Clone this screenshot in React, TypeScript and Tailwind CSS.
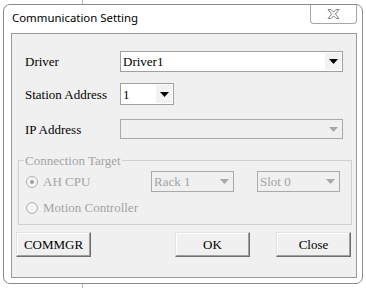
const serif = { fontFamily: '"Liberation Serif", "Times New Roman", serif' };

function Arrow({ disabled }: { disabled?: boolean }) {
  return (
    <svg width="9" height="5" viewBox="0 0 9 5">
      <polygon points="0,0 9,0 4.5,5" fill={disabled ? "#a8a8a8" : "#000"} />
    </svg>
  );
}

function Select({
  value,
  width,
  height,
  disabled,
}: {
  value?: string;
  width: string;
  height: string;
  disabled?: boolean;
}) {
  return (
    <div
      className={`flex items-stretch border ${width} ${height} ${
        disabled ? "border-[#a9a9a9] bg-[#f0f0f0]" : "border-[#a0a0a0] bg-white"
      }`}
    >
      <div
        className={`flex-1 flex items-center pl-[2px] text-[13px] leading-none ${
          disabled ? "text-[#a4a4a4]" : "text-black"
        }`}
        style={serif}
      >
        {value}
      </div>
      <div
        className={`w-[16px] m-[1px] flex items-center justify-center ${
          disabled ? "" : "bg-[#f2f2f2]"
        }`}
      >
        <Arrow disabled={disabled} />
      </div>
    </div>
  );
}

function Radio({ checked, label }: { checked?: boolean; label: string }) {
  return (
    <div className="flex items-center h-[15px]">
      <div className="w-[12px] h-[12px] rounded-full border border-[#b0b0b0] bg-[#f4f4f4] flex items-center justify-center ml-[7px]">
        {checked && <div className="w-[4px] h-[4px] rounded-full bg-[#a0a0a0]" />}
      </div>
      <span className="ml-[5px] text-[13px] text-[#a4a4a4] leading-none" style={serif}>
        {label}
      </span>
    </div>
  );
}

function Button({ label }: { label: string }) {
  return (
    <button
      className="w-[75px] h-[25px] bg-[#f0f0f0] border border-t-[#e3e3e3] border-l-[#e3e3e3] border-r-[#6e6e6e] border-b-[#6e6e6e] text-[13px] text-black leading-none shadow-[inset_-1px_-1px_0_#a0a0a0,inset_1px_1px_0_#ffffff]"
      style={serif}
    >
      {label}
    </button>
  );
}

export default function App() {
  return (
    <div className="w-[366px] h-[288px] bg-white overflow-hidden flex flex-col">
      <div className="h-[4px]">
        <div className="ml-[82px] w-px h-full bg-[#b4b4b4]" />
      </div>

      <div className="ml-[3px] w-[360px] h-[280px] rounded-[7px] border border-[#8a8a8a] bg-white flex flex-col pl-[7px] pr-[5px] pb-[5px]">
        {/* title bar */}
        <div className="h-[28px] flex items-start">
          <div
            className="pl-[1px] pt-[7px] text-[11.4px] leading-none text-black"
            style={{ fontFamily: '"Noto Sans", "Open Sans", sans-serif' }}
          >
            Communication Setting
          </div>
          <div className="ml-auto w-[47px] h-[19px] border border-t-0 border-[#a6a6a6] rounded-b-[4px] bg-white flex items-center justify-center">
            <svg width="13" height="10" viewBox="0 0 13 10">
              <polygon
                points="1,0.5 4,0.5 6.5,3 9,0.5 12,0.5 8.5,5 12,9.5 9,9.5 6.5,7 4,9.5 1,9.5 4.5,5"
                fill="#f4f4f4"
                stroke="#7a7a7a"
                strokeWidth="0.9"
              />
            </svg>
          </div>
        </div>

        {/* client area */}
        <div className="flex-1 border border-[#9a9a9a] bg-[#f0f0f0] flex flex-col pt-[17px]">
          <div className="flex items-center h-[21px]">
            <span className="w-[95px] ml-[13px] text-[13px] leading-none text-black" style={serif}>
              Driver
            </span>
            <Select value="Driver1" width="w-[223px]" height="h-[21px]" />
          </div>

          <div className="flex items-center h-[22px] mt-[11px]">
            <span className="w-[95px] ml-[13px] text-[13px] leading-none text-black" style={serif}>
              Station Address
            </span>
            <Select value="1" width="w-[54px]" height="h-[22px]" />
          </div>

          <div className="flex items-center h-[20px] mt-[14px]">
            <span className="w-[95px] ml-[13px] text-[13px] leading-none text-black" style={serif}>
              IP Address
            </span>
            <Select width="w-[223px]" height="h-[20px]" disabled />
          </div>

          <fieldset className="ml-[6px] mr-[4px] mt-[14px] border border-[#d0d0d0] h-[72px] pl-[5px]">
            <legend className="px-[1px] text-[13px] text-[#a4a4a4] leading-[15px]" style={serif}>
              Connection Target
            </legend>
            <div className="flex items-center mt-[3px] -ml-[5px]">
              <div className="w-[132px]">
                <Radio checked label="AH CPU" />
              </div>
              <Select value="Rack 1" width="w-[83px]" height="h-[21px]" disabled />
              <div className="w-[23px]" />
              <Select value="Slot 0" width="w-[83px]" height="h-[21px]" disabled />
            </div>
            <div className="-ml-[5px] mt-[8px]">
              <Radio label="Motion Controller" />
            </div>
          </fieldset>

          <div className="flex items-center mt-[7px] ml-[4px]">
            <Button label="COMMGR" />
            <div className="w-[84px]" />
            <Button label="OK" />
            <div className="w-[26px]" />
            <Button label="Close" />
          </div>
        </div>
      </div>

      <div className="h-[4px]">
        <div className="ml-[82px] w-px h-full bg-[#b4b4b4]" />
      </div>
    </div>
  );
}
